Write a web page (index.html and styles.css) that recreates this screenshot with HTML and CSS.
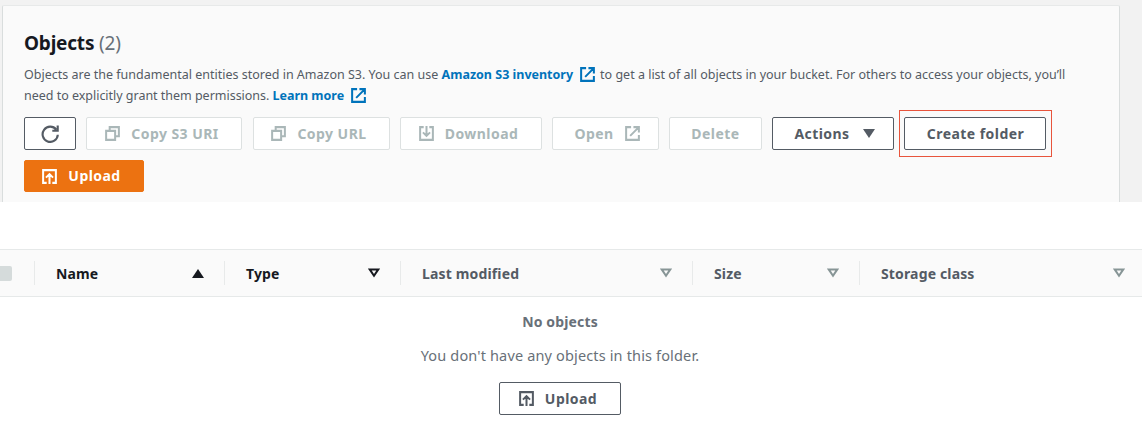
FILE: index.html
```html
<!DOCTYPE html>
<html lang="en">
<head>
<meta charset="utf-8">
<title>Objects</title>
<link rel="stylesheet" href="styles.css">
</head>
<body>
<svg class="defs" aria-hidden="true">
  <symbol id="external" viewBox="0 0 16 16"><path d="M6.500 1.200H1.200v13.600h13.600V9.500M9 1.200h5.800V7M14.500 1.500L5.500 10.500"/></symbol>
  <symbol id="copy" viewBox="0 0 16 16"><path d="M1.200 5.200h9.600v9.600H1.200zM5 5V1.200h9.800V11H11"/></symbol>
  <symbol id="download" viewBox="0 0 16 16"><path d="M5 1.200H1.200v13.600h13.600V1.200H11M8 0v10.500M4.200 6.800L8 10.600l3.800-3.800"/></symbol>
  <symbol id="upload" viewBox="0 0 16 16"><path d="M5 14.800H1.200V1.200h13.600v13.600H11M8 16V5.500M4.200 9.200L8 5.400l3.800 3.800"/></symbol>
  <symbol id="refresh" viewBox="0 0 18 18"><path d="M16.800 9.800A7.600 7.600 0 1 1 15.200 4.600M16.700 .5v5.200h-5.400"/></symbol>
  <symbol id="sort" viewBox="0 0 12 10"><path d="M1.700 1.400h8.600L6 7.700z"/></symbol>
</svg>

<section class="panel-wrap">
  <div class="panel">
    <h2 class="title">Objects <span class="count">(2)</span></h2>
    <p class="desc"><span class="line">Objects are the fundamental entities stored in Amazon S3. You can use <a class="link">Amazon S3 inventory<svg class="icon"><use href="#external"/></svg></a><span class="after">to get a list of all objects in your bucket. For others to access your objects, you’ll</span></span><span class="line second">need to explicitly grant them permissions. <a class="link">Learn more<svg class="icon"><use href="#external"/></svg></a></span></p>
    <div class="actions">
      <button class="btn refresh"><svg class="icon"><use href="#refresh"/></svg></button>
      <button class="btn off copy-uri"><svg class="icon"><use href="#copy"/></svg>Copy S3 URI</button>
      <button class="btn off copy-url"><svg class="icon"><use href="#copy"/></svg>Copy URL</button>
      <button class="btn off download"><svg class="icon"><use href="#download"/></svg>Download</button>
      <button class="btn off open">Open<svg class="icon"><use href="#external"/></svg></button>
      <button class="btn off delete">Delete</button>
      <button class="btn menu">Actions<span class="caret"></span></button>
      <div class="highlight"><button class="btn create">Create folder</button></div>
    </div>
    <button class="btn primary"><svg class="icon"><use href="#upload"/></svg>Upload</button>
  </div>
</section>

<section class="table">
  <div class="head">
    <div class="select"><span class="checkbox"></span></div>
    <div class="col dark">Name<span class="ascending"></span></div>
    <div class="col dark">Type<svg class="sort"><use href="#sort"/></svg></div>
    <div class="col">Last modified<svg class="sort"><use href="#sort"/></svg></div>
    <div class="col">Size<svg class="sort"><use href="#sort"/></svg></div>
    <div class="col last">Storage class<svg class="sort"><use href="#sort"/></svg></div>
  </div>
  <div class="empty">
    <strong class="empty-title">No objects</strong>
    <p class="empty-text">You don't have any objects in this folder.</p>
    <button class="btn empty-upload"><svg class="icon"><use href="#upload"/></svg>Upload</button>
  </div>
</section>
</body>
</html>
```
FILE: styles.css
```css
* { box-sizing: border-box; }
body { margin: 0; height: 431px; overflow: hidden; background: #fff; color: #545b64; font-family: "Noto Sans", sans-serif; }
.defs { display: none; }
.icon { width: 15px; height: 15px; flex: none; fill: none; stroke: currentColor; stroke-width: 2.150; }

.panel-wrap { height: 202px; padding: 5px 22px 0 2px; background: #f2f2f2; overflow: hidden; }
.panel { height: 197px; padding: 26px 0 0 21px; background: #fafafa; border: 1px solid #d9dddd; border-top-color: #e7e9e9; border-bottom: 0; border-radius: 2px 2px 0 0; }
.title { margin: 0; height: 22px; font-size: 19px; line-height: 22px; letter-spacing: -.2px; color: #16191f; white-space: nowrap; }
.count { font-weight: 400; color: #687078; }
.desc { margin: 10px 0 0; font-size: 12.500px; line-height: 21px; white-space: nowrap; }
.line { display: flex; align-items: center; height: 21px; white-space: pre; }
.second { letter-spacing: -.02px; }
.link { display: flex; align-items: center; gap: 7px; font-weight: 700; color: #0073bb; }
.after { margin-left: 5px; }

.actions { display: flex; align-items: center; height: 33px; margin-top: 11px; }
.btn { display: flex; align-items: center; justify-content: center; height: 33px; margin: 0; padding: 0; flex: none; background: #fff; border: 1px solid #545b64; border-radius: 2px; color: #545b64; font: 700 14px/20px "Noto Sans", sans-serif; letter-spacing: .45px; white-space: nowrap; }
.btn .icon { margin-right: 11px; }
.off { color: #aab7b8; border-color: #dde1e1; }
.refresh { width: 52px; margin-right: 10px; }
.btn.refresh .icon { width: 18px; height: 18px; margin: 0; }
.copy-uri { width: 156px; margin-right: 11px; padding-right: 4px; }
.copy-url { width: 137px; margin-right: 10px; padding-right: 5px; }
.download { width: 142px; margin-right: 10px; padding-right: 5px; }
.open { width: 107px; margin-right: 10px; padding-left: 3px; }
.btn.open .icon { margin: 0 0 0 11px; }
.delete { width: 93px; margin-right: 10px; }
.menu { width: 122px; margin-right: 5px; padding-left: 3px; }
.caret { margin-left: 13px; border: solid transparent; border-width: 9px 6px 0; border-top-color: #545b64; }
.highlight { height: 47px; padding: 6px 5px 6px 4px; border: 1px solid #e8543c; }
.create { width: 142px; padding-left: 1px; }
.primary { width: 120px; height: 32px; margin-top: 10px; padding-right: 5px; background: #ec7211; border-color: #ec7211; color: #fff; }

.table { margin-top: 47px; }
.head { display: grid; grid-template-columns: 34px 190px 176px 292px 167px 283px; align-items: center; height: 48px; background: #fafafa; border: solid #e6e9e9; border-width: 1px 0; }
.checkbox { display: block; width: 12px; height: 15px; background: #d5dbdb; border-radius: 0 2px 2px 0; }
.col { display: flex; align-items: center; justify-content: space-between; height: 24px; padding: 0 20px 0 21px; border-left: 1px solid #e8eaea; font-size: 14px; font-weight: 700; letter-spacing: .15px; }
.col.last { padding-right: 17px; }
.dark { color: #16191f; }
.sort { width: 12px; height: 10px; fill: none; stroke: #879596; stroke-width: 2; }
.dark .sort { stroke: #16191f; }
.ascending { border: solid transparent; border-width: 0 6px 9px; border-bottom-color: #16191f; }
.empty { display: flex; flex-direction: column; align-items: center; width: 1120px; padding-top: 15px; color: #687078; }
.empty-title { font-size: 14px; line-height: 20px; letter-spacing: .15px; }
.empty-text { margin: 13px 0 0; font-size: 14.500px; line-height: 20px; letter-spacing: .15px; }
.empty-upload { width: 122px; height: 33px; margin-top: 17px; padding-right: 4px; }
```
